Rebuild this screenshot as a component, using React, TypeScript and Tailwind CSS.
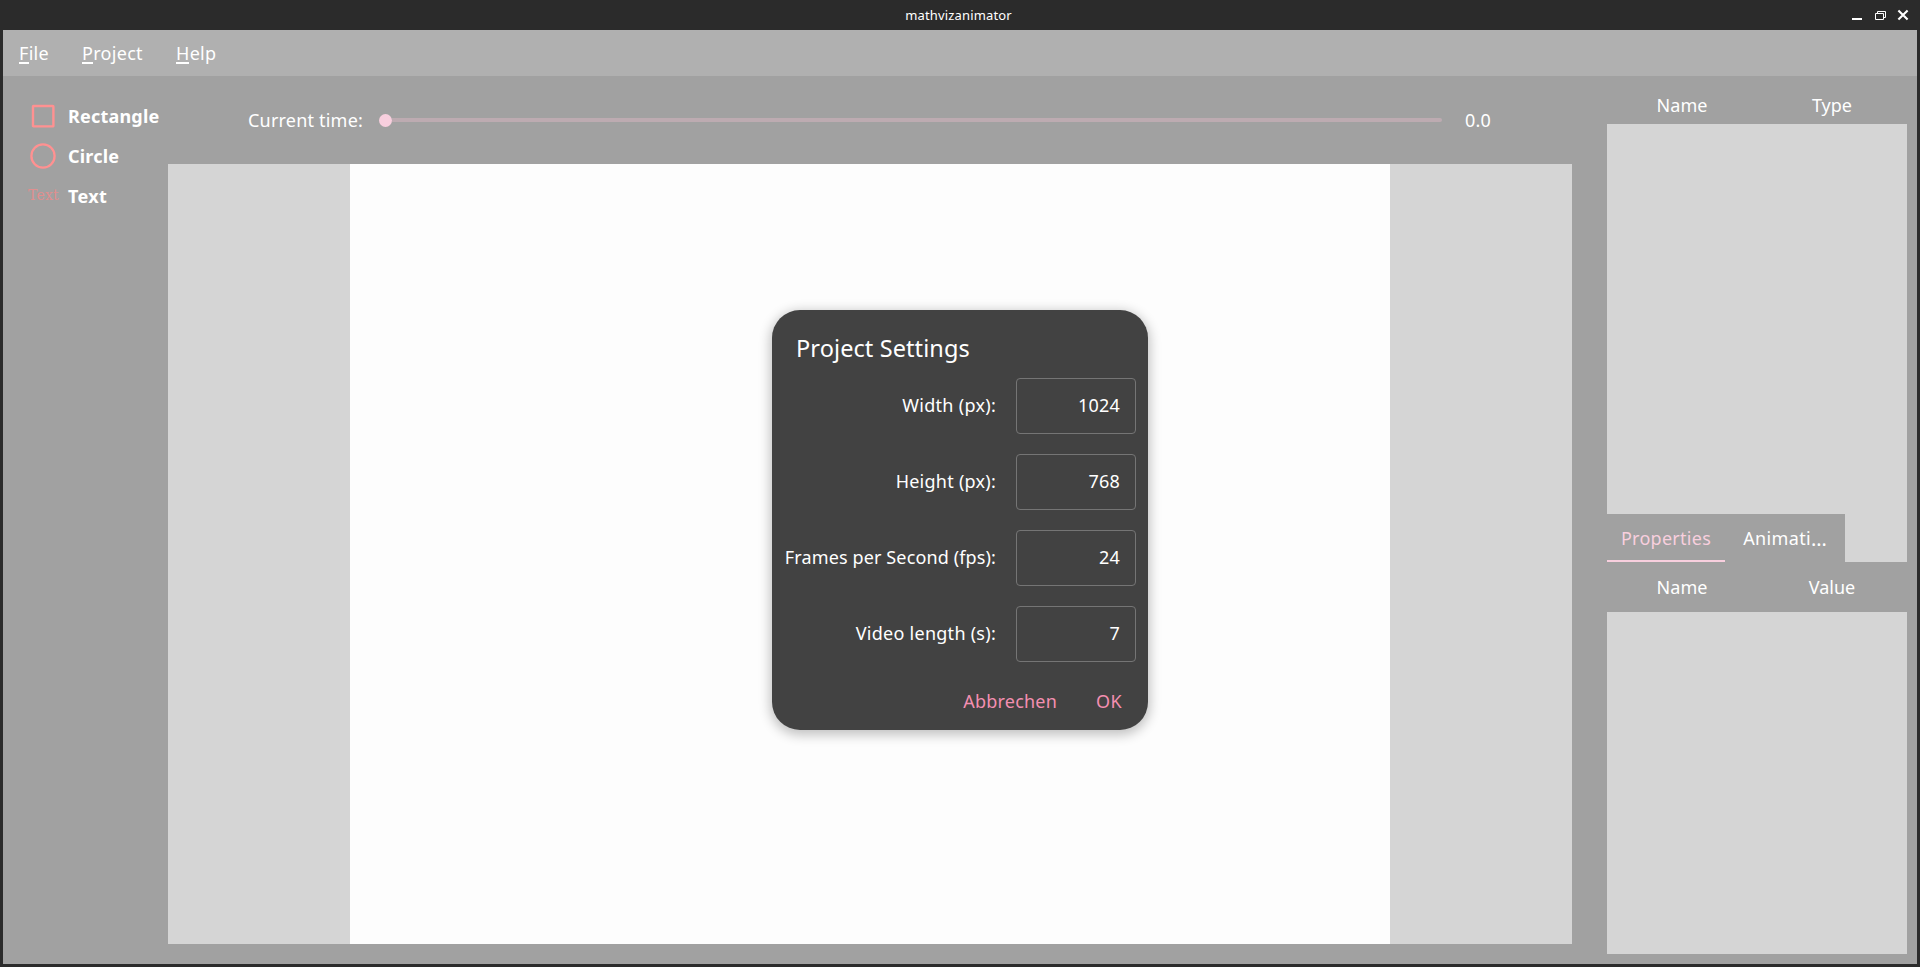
import React from "react";

const menus = [
  { label: "File", box: "w-[30px] ml-4", bar: "w-[10px]", tracking: "tracking-[0.3px]" },
  { label: "Project", box: "w-[61px] ml-[33px]", bar: "w-[11px]", tracking: "tracking-[0.3px]" },
  { label: "Help", box: "w-[40px] ml-[33px]", bar: "w-[13px]", tracking: "tracking-[0.3px]" },
];

const fields = [
  { label: "Width (px):", value: "1024", tracking: "tracking-[0.28px]" },
  { label: "Height (px):", value: "768", tracking: "tracking-[0.25px]" },
  { label: "Frames per Second (fps):", value: "24", tracking: "tracking-[0.13px]" },
  { label: "Video length (s):", value: "7", tracking: "tracking-[0.26px]" },
];

function TitleBar() {
  return (
    <header className="relative flex h-[30px] shrink-0 items-center justify-center bg-[#2b2b2b] text-[13px] tracking-[0.15px] text-white">
      <span className="-ml-[3px] pt-px">mathvizanimator</span>
      <svg className="absolute top-0 right-0 h-[30px] w-[80px]" viewBox="0 0 80 30" fill="none" stroke="white">
        <path d="M12 19H22" strokeWidth="2" />
        <path d="M35.5 13.5H43.5V19.5H35.5ZM37.5 13.5V11.5H45.5V17.5H43.5" />
        <path d="M58.4 10.4L67.6 19.6M67.6 10.4L58.4 19.6" strokeWidth="2.1" />
      </svg>
    </header>
  );
}

function MenuBar() {
  return (
    <nav className="flex h-[46px] shrink-0 items-center bg-[#b0b0b0]">
      {menus.map((m) => (
        <div key={m.label} className={`relative whitespace-nowrap ${m.box} ${m.tracking}`}>
          {m.label}
          <span className={`absolute bottom-[2.5px] left-0 h-0.5 bg-white ${m.bar}`} />
        </div>
      ))}
    </nav>
  );
}

function Tools() {
  return (
    <aside className="flex w-[165px] shrink-0 flex-col pt-5 pl-[25px] font-bold tracking-[0.2px]">
      <div className="flex h-10 items-center">
        <svg className="mr-[9px] h-[30px] w-[31px]" viewBox="0 0 31 30" fill="none" stroke="#ff9191" strokeWidth="2.4">
          <rect x="5" y="5" width="20.4" height="20.4" rx="0.5" />
        </svg>
        <span>Rectangle</span>
      </div>
      <div className="flex h-10 items-center">
        <svg className="mr-[9px] h-[30px] w-[31px]" viewBox="0 0 31 30" fill="none" stroke="#ff9191" strokeWidth="2.3">
          <circle cx="15" cy="15" r="11.6" />
        </svg>
        <span>Circle</span>
      </div>
      <div className="flex h-10 items-center">
        <span className="mr-[9px] flex w-[31px] justify-center pb-px font-['DejaVu_Serif',serif] text-[14px] font-normal tracking-[0.2px] text-[#e08f8f]">
          Text
        </span>
        <span className="tracking-[0.4px]">Text</span>
      </div>
    </aside>
  );
}

function Stage() {
  return (
    <main className="flex w-[1404px] shrink-0 flex-col">
      <div className="flex h-[88px] items-center pl-20">
        <span className="w-[131px] tracking-[0.2px] whitespace-nowrap">Current time:</span>
        <span className="h-[13px] w-[13px] rounded-full bg-[#f8cfde]" />
        <span className="h-1 w-[1050px] rounded-r-full bg-[#bdabb1]" />
        <span className="ml-[23px] tracking-[0.2px]">0.0</span>
      </div>
      <div className="flex h-[780px] justify-center bg-[#d5d5d5]">
        <div className="w-[1040px] bg-[#fdfdfd]" />
      </div>
    </main>
  );
}

function Header({ right }: { right: string }) {
  return (
    <div className="grid h-full grid-cols-2 items-center text-center">
      <span>Name</span>
      <span>{right}</span>
    </div>
  );
}

function Inspector() {
  return (
    <aside className="ml-[35px] flex w-[300px] shrink-0 flex-col">
      <div className="h-12 pt-[10px]">
        <Header right="Type" />
      </div>
      <div className="h-[390px] bg-[#d5d5d5]" />
      <div className="flex h-12 bg-[#d5d5d5]">
        <div className="flex h-12 w-[118px] items-center justify-center border-b-2 border-[#f8cfde] bg-[#a1a1a1] pt-0.5 tracking-[0.28px] text-[#f8cfde]">
          Properties
        </div>
        <div className="flex h-12 w-[120px] items-center justify-center bg-[#a1a1a1]">
          <span className="tracking-[0.35px]">Animati</span>
          <span className="text-[20px] leading-[25px]">…</span>
        </div>
      </div>
      <div className="h-[50px]">
        <Header right="Value" />
      </div>
      <div className="h-[342px] bg-[#d5d5d5]" />
    </aside>
  );
}

function SettingsDialog() {
  return (
    <section className="absolute top-[310px] left-[772px] flex h-[420px] w-[376px] flex-col rounded-[28px] bg-[#424242] pr-3 shadow-[0_3px_12px_2px_rgba(0,0,0,0.24)]">
      <h1 className="flex h-[68px] shrink-0 items-center pt-[9px] pl-6 text-[23.5px] font-normal tracking-[0.1px]">
        Project Settings
      </h1>
      <div className="flex shrink-0 flex-col gap-5">
        {fields.map((f) => (
          <label key={f.label} className="flex h-14 items-center justify-end gap-5">
            <span className={`pb-px ${f.tracking}`}>{f.label}</span>
            <span className="flex h-14 w-[120px] items-center justify-end rounded-[4px] border border-[#757575] pr-[15px] pb-px tracking-[0.2px]">
              {f.value}
            </span>
          </label>
        ))}
      </div>
      <div className="flex h-[68px] shrink-0 items-center justify-end gap-[39px] pt-[11px] pr-[14px] text-[#f48fb1]">
        <span className="tracking-[0.2px]">Abbrechen</span>
        <span className="tracking-[0.4px]">OK</span>
      </div>
    </section>
  );
}

export default function App() {
  return (
    <div className="relative flex h-[967px] w-[1920px] flex-col overflow-hidden bg-[#2b2b2b] font-['Noto_Sans',sans-serif] text-[18px] text-white">
      <TitleBar />
      <div className="mx-[3px] flex h-[934px] flex-col bg-[#a1a1a1]">
        <MenuBar />
        <div className="flex grow">
          <Tools />
          <Stage />
          <Inspector />
        </div>
      </div>
      <SettingsDialog />
    </div>
  );
}
